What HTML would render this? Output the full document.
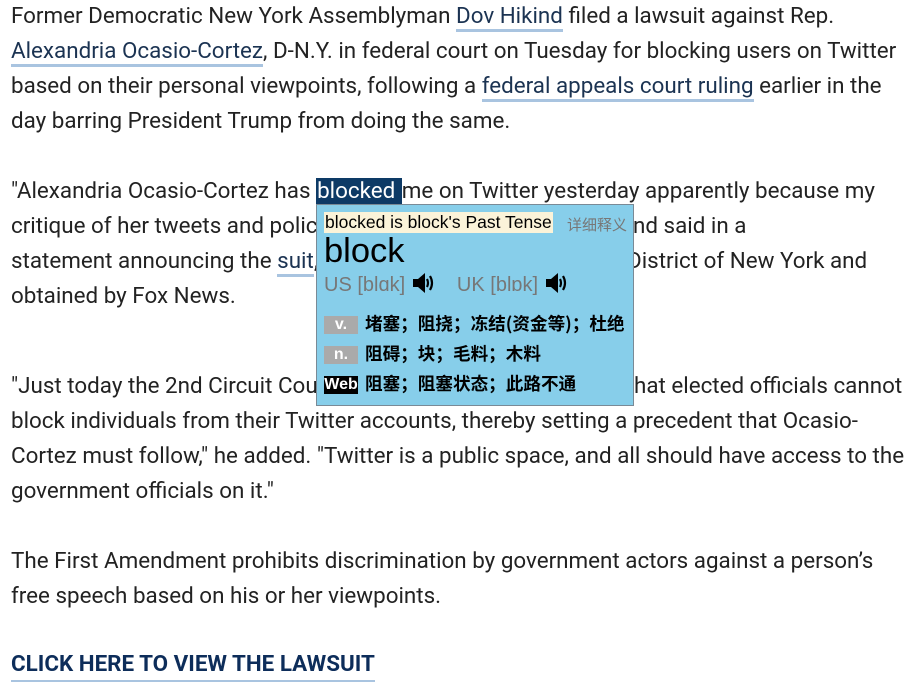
<!DOCTYPE html>
<html><head><meta charset="utf-8"><style>
body{margin:0;width:920px;height:680px;background:#fff;overflow:hidden;position:relative;font-family:"Roboto","Liberation Sans",sans-serif;color:#222;}
.l{position:absolute;left:11px;font-size:22.4px;white-space:nowrap;line-height:24px;}
a{color:#1b3352;text-decoration:none;border-bottom:3px solid #a9c4e0;}
.sel{background:#0d3a66;color:#fff;padding:0 1px;}
#pop{position:absolute;left:316px;top:204px;width:316px;height:200px;background:#87ceea;border:1px solid #7a8a96;font-family:"Liberation Sans","Noto Sans CJK SC",sans-serif;}
.tag{display:inline-block;width:34px;height:18px;background:#aaa;color:#fff;font-weight:bold;font-size:16px;text-align:center;line-height:18px;margin-right:7px;font-family:"Liberation Sans",sans-serif;vertical-align:1px;}
.row{position:absolute;left:7px;font-size:17.6px;color:#000;font-weight:bold;white-space:nowrap;font-family:"Noto Sans CJK SC",sans-serif;line-height:24px;}
svg{vertical-align:-3px}
</style></head><body>
<div class="l" style="top:4px">Former Democratic New York Assemblyman <a>Dov Hikind</a> filed a lawsuit against Rep.</div>
<div class="l" style="top:39px"><a>Alexandria Ocasio-Cortez</a>, D-N.Y. in federal court on Tuesday for blocking users on Twitter</div>
<div class="l" style="top:74px">based on their personal viewpoints, following a <a>federal appeals court ruling</a> earlier in the</div>
<div class="l" style="top:109px">day barring President Trump from doing the same.</div>
<div class="l" style="top:179px">"Alexandria Ocasio-Cortez has <span class="sel">blocked </span>me on Twitter yesterday apparently because my</div>
<div class="l" style="top:214px">critique of her tweets and policies</div>
<div class="l" style="top:214px;left:633px">nd said in a</div>
<div class="l" style="top:249px">statement announcing the <a>suit</a>,</div>
<div class="l" style="top:249px;left:627px">District of New York and</div>
<div class="l" style="top:284px">obtained by Fox News.</div>
<div class="l" style="top:374px">"Just today the 2nd Circuit Court</div>
<div class="l" style="top:374px;left:634px">hat elected officials cannot</div>
<div class="l" style="top:409px">block individuals from their Twitter accounts, thereby setting a precedent that Ocasio-</div>
<div class="l" style="top:444px">Cortez must follow," he added. "Twitter is a public space, and all should have access to the</div>
<div class="l" style="top:479px">government officials on it."</div>
<div class="l" style="top:549px">The First Amendment prohibits discrimination by government actors against a person’s</div>
<div class="l" style="top:584px">free speech based on his or her viewpoints.</div>
<div class="l" style="top:652px;font-weight:bold;color:#0d2d5a;"><span style="border-bottom:2px solid #a9c4e0;padding-bottom:3px">CLICK HERE TO VIEW THE LAWSUIT</span></div>
<div id="pop">
<div style="position:absolute;left:7px;top:7px;background:#fbf3d9;font-size:17.5px;line-height:21px;padding:0 1px;color:#000;white-space:nowrap">blocked is block's Past Tense</div>
<div style="position:absolute;left:250px;top:9px;font-size:15px;color:#777;font-family:'Noto Sans CJK SC',sans-serif">详细释义</div>
<div style="position:absolute;left:7px;top:26px;font-size:34.5px;line-height:40px;color:#000">block</div>
<div style="position:absolute;left:7px;top:67px;font-size:20px;line-height:24px;color:#777;white-space:nowrap">US [blɑk] <svg width="24" height="22" viewBox="0 0 24 22"><path d="M2 7h5l7-6v20l-7-6H2z" fill="#000"/><path d="M16 7q2 4 0 8M19 4q4 7 0 14" stroke="#000" stroke-width="2.2" fill="none"/></svg>&nbsp;&nbsp;&nbsp;&nbsp;UK [blɒk] <svg width="24" height="22" viewBox="0 0 24 22"><path d="M2 7h5l7-6v20l-7-6H2z" fill="#000"/><path d="M16 7q2 4 0 8M19 4q4 7 0 14" stroke="#000" stroke-width="2.2" fill="none"/></svg></div>
<div class="row" style="top:107px"><span class="tag">v.</span>堵塞；阻挠；冻结(资金等)；杜绝</div>
<div class="row" style="top:137px"><span class="tag">n.</span>阻碍；块；毛料；木料</div>
<div class="row" style="top:167px"><span class="tag" style="background:#000">Web</span>阻塞；阻塞状态；此路不通</div>
</div>
</body></html>
